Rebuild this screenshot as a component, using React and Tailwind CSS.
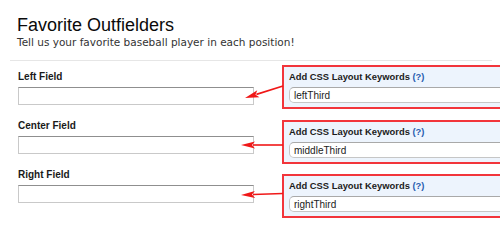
import React from "react";

const groups = [
  { label: "Left Field", kw: "leftThird" },
  { label: "Center Field", kw: "middleThird" },
  { label: "Right Field", kw: "rightThird" },
];

function Arrow({ x1, y1, x2, y2 }) {
  const dx = x2 - x1;
  const dy = y2 - y1;
  const len = Math.hypot(dx, dy);
  const ux = dx / len;
  const uy = dy / len;
  const hl = 14;
  const hw = 3.6;
  const bx = x2 - ux * hl;
  const by = y2 - uy * hl;
  const px = -uy;
  const py = ux;
  return (
    <g>
      <line x1={x1} y1={y1} x2={bx + ux * 2} y2={by + uy * 2} stroke="#f01818" strokeWidth="1.6" />
      <polygon
        points={`${x2},${y2} ${bx + px * hw},${by + py * hw} ${bx + ux * 3},${by + uy * 3} ${bx - px * hw},${by - py * hw}`}
        fill="#f01818"
      />
    </g>
  );
}

export default function App() {
  return (
    <div
      className="relative w-[500px] h-[230px] overflow-hidden bg-white text-[#111]"
      style={{ fontFamily: '"Liberation Sans", Arial, sans-serif' }}
    >
      <div className="pl-[17px] pt-[16px]">
        <h1 className="text-[18px] leading-[18px] font-normal text-[#0a0a0a]">Favorite Outfielders</h1>
        <p className="mt-[2px] font-['DejaVu_Sans',sans-serif] text-[10.5px] leading-[13px] text-[#333]">
          Tell us your favorite baseball player in each position!
        </p>
      </div>
      <div className="ml-[10px] mt-[11px] h-px w-[482px] bg-[#e6e6e6]" />
      <div className="flex">
        <div className="ml-[18px] mt-[10px] flex w-[236px] flex-col">
          {groups.map((g) => (
            <div key={g.label} className="mb-[15px] flex flex-col">
              <div className="text-[10px] font-bold leading-[12px] text-[#1a1a1a]">{g.label}</div>
              <div className="mt-[4px] h-[18px] w-[236px] border border-[#c9c9c9] border-t-[#8f8f8f] bg-white" />
            </div>
          ))}
        </div>
        <div className="ml-[28px] mt-[4px] flex flex-col gap-[10px]">
          {groups.map((g, i) => (
            <div
              key={g.kw}
              className={`h-[44px] w-[240px] border-2 border-[#f2353b] bg-[#edf4fd] pl-[5px] pt-[4px] ${i === 0 ? "mb-[1px]" : ""}`}
            >
              <div className="text-[9.4px] font-bold leading-[11px] text-[#1c1c1c]">
                Add CSS Layout Keywords <span className="text-[#2a5db0]">(?)</span>
              </div>
              <div className="mt-[5px] flex h-[16px] w-[260px] items-center rounded-[5px] border border-[#c6c6c6] border-t-[#a9a9a9] bg-white pl-[4px] text-[10px] text-[#222]">
                {g.kw}
              </div>
            </div>
          ))}
        </div>
      </div>
      <svg className="pointer-events-none absolute left-0 top-0" width="500" height="230">
        <Arrow x1={283} y1={86} x2={245} y2={98} />
        <Arrow x1={283} y1={145} x2={241} y2={145} />
        <Arrow x1={283} y1={193.5} x2={241} y2={195} />
      </svg>
    </div>
  );
}
